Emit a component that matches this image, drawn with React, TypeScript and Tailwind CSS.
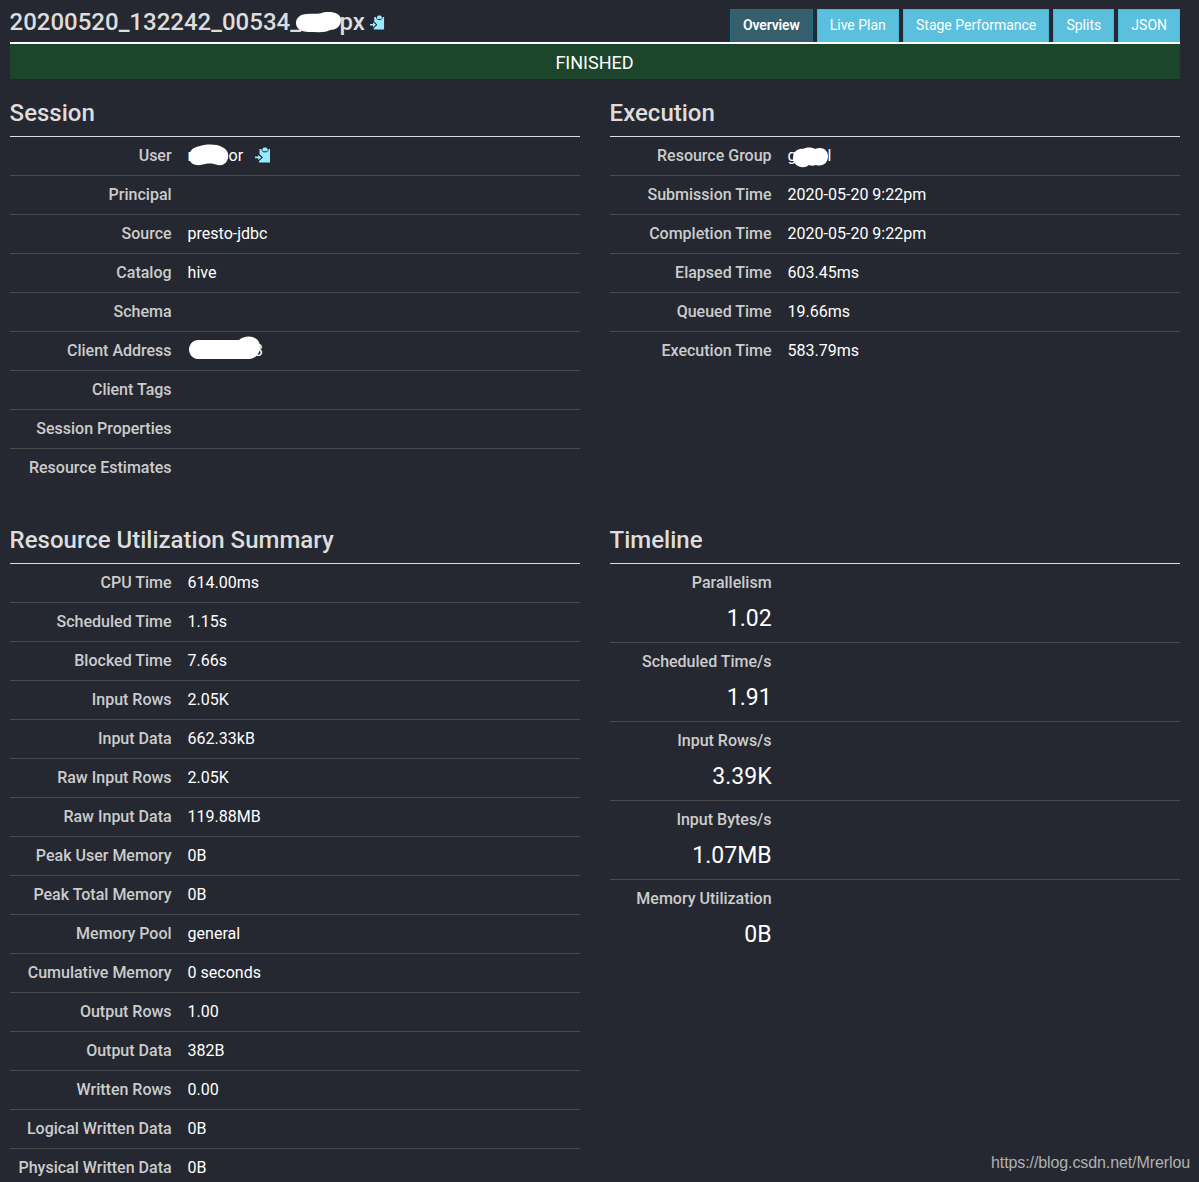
import type { ReactNode } from 'react'

const tabs = ['Live Plan', 'Stage Performance', 'Splits', 'JSON']

const execution = [
  ['Submission Time', '2020-05-20 9:22pm'],
  ['Completion Time', '2020-05-20 9:22pm'],
  ['Elapsed Time', '603.45ms'],
  ['Queued Time', '19.66ms'],
  ['Execution Time', '583.79ms'],
]

const resources = [
  ['CPU Time', '614.00ms'],
  ['Scheduled Time', '1.15s'],
  ['Blocked Time', '7.66s'],
  ['Input Rows', '2.05K'],
  ['Input Data', '662.33kB'],
  ['Raw Input Rows', '2.05K'],
  ['Raw Input Data', '119.88MB'],
  ['Peak User Memory', '0B'],
  ['Peak Total Memory', '0B'],
  ['Memory Pool', 'general'],
  ['Cumulative Memory', '0 seconds'],
  ['Output Rows', '1.00'],
  ['Output Data', '382B'],
  ['Written Rows', '0.00'],
  ['Logical Written Data', '0B'],
  ['Physical Written Data', '0B'],
]

const timeline = [
  ['Parallelism', '1.02'],
  ['Scheduled Time/s', '1.91'],
  ['Input Rows/s', '3.39K'],
  ['Input Bytes/s', '1.07MB'],
  ['Memory Utilization', '0B'],
]

// clipboard with an arrow pointing into it
function CopyIcon({ className }: { className: string }) {
  return (
    <svg viewBox="0 0 16 16" className={className} fill="#99e9ff">
      <path d="M4.5 2H15v13.5H4V13.2L7.6 10.4 4.5 7.8z" />
      <path d="M7 1.8v1.6l1.2 1.4h3.6L13 3.400V1.8" fill="none" stroke="#252830" strokeWidth="1" />
      <path d="M7.6 3.2V1.600L8.8.5h2.4l1.2 1.100v1.6l-.8.9H8.400z" />
      <path d="M3.8 7L7.4 10.4l-3.600 3.4" fill="none" stroke="#252830" strokeWidth="1" />
      <path d="M0 9.600h3.2V7.800L6.400 10.4l-3.200 2.6V11.200H0z" />
    </svg>
  )
}

function Section({ title, className = '', children }: { title: string; className?: string; children: ReactNode }) {
  return (
    <section className={className}>
      <h3 className="h-[38px] border-b border-[#ddd] text-2xl leading-[28px] font-medium text-[#ddd]">
        <span className="-ml-[0.4px]">{title}</span>
      </h3>
      {children}
    </section>
  )
}

function Row({ label, children }: { label: string; children?: ReactNode }) {
  return (
    <div className="flex h-[39px] border-b border-[#4a4a4a] text-base leading-[37px] last:border-b-0">
      <div className="w-[161.6px] shrink-0 text-right font-medium text-[#ccc]">{label}</div>
      <div className="flex pl-4 text-white">{children}</div>
    </div>
  )
}

export default function App() {
  return (
    <div className="relative h-[1182px] overflow-hidden bg-[#252830] pr-[19px] pl-[10px] font-[Roboto,sans-serif] text-white">
      <header className="flex h-[44px] justify-between border-b-2 border-white">
        <h3 className="-ml-[0.5px] flex pt-[8px] text-2xl leading-[28px] font-medium text-[#ddd]">
          20200520_132242_00534_
          <svg viewBox="0 0 50 24" className="-ml-[6px] mt-[2px] h-[24px] w-[50px]">
            <path d="M12 4C18 3 22 5 28 2.5C37 1 46 3 46 10C46 17 40 20 35 20C31 23 22 22 14 22C5 22 1 18 1 13C1 8 5 4 12 4z" fill="#fff" />
          </svg>
          <span className="-ml-[5.5px]">px</span>
          <CopyIcon className="mt-[7px] ml-[5px] size-[15px]" />
        </h3>
        <nav className="flex gap-[4.15px] pt-[9px] text-sm leading-[31px] whitespace-nowrap">
          <a className="border border-b-0 border-[#1b6d85] bg-[#365f6e] px-3 font-semibold tracking-[-0.16px]">Overview</a>
          {tabs.map((tab) => (
            <a key={tab} className="border border-b-0 border-[#46b8da] bg-[#5bc0de] px-3">{tab}</a>
          ))}
        </nav>
      </header>
      <div className="h-[35px] bg-[#1c462b] pr-px text-center text-lg leading-[37px]">FINISHED</div>

      <main className="grid grid-cols-2 gap-x-[30px] pt-[20px]">
        <Section title="Session" className="h-[427px]">
          <Row label="User">
            <span>r</span>
            <svg viewBox="0 0 44 24" className="-ml-[5px] mt-[7px] h-[24px] w-[44px]">
              <path d="M1 13C1 6 6 3 12 2C20 0 28 0 34 3C39 5 41 10 40 14C39 19 35 22 30 21C26 20 23 19 17 20C8 23 1 20 1 13z" fill="#fff" />
            </svg>
            <span className="-ml-[3.5px]">or</span>
            <CopyIcon className="mt-[10px] ml-[11.5px] size-[16px]" />
          </Row>
          <Row label="Principal" />
          <Row label="Source">presto-jdbc</Row>
          <Row label="Catalog">hive</Row>
          <Row label="Schema" />
          <Row label="Client Address">
            <svg viewBox="0 0 73 24" className="relative z-10 mt-[4px] h-[24px] w-[73px]">
              <path d="M10 4H51C57-2 72-1 72 11C72 18 67 23 61 23H10C-2 22-2 5 10 4z" fill="#fff" />
            </svg>
            <span className="-ml-[6.5px]">3</span>
          </Row>
          <Row label="Client Tags" />
          <Row label="Session Properties" />
          <Row label="Resource Estimates" />
        </Section>

        <Section title="Execution">
          <Row label="Resource Group">
            <span>g</span>
            <svg viewBox="0 0 38 22" className="-ml-[5px] mt-[10px] h-[22px] w-[38px]">
              <path d="M1 11C1 5 6 1 11 2C14 0 20 0 23 2C30-1 36 3 36 9C36 16 31 20 24 18C21 19 19 19 17 18C11 23 1 19 1 11z" fill="#fff" />
            </svg>
            <span className="-ml-[2px]">l</span>
          </Row>
          {execution.map(([label, value]) => (
            <Row key={label} label={label}>{value}</Row>
          ))}
        </Section>

        <Section title="Resource Utilization Summary">
          {resources.map(([label, value]) => (
            <Row key={label} label={label}>{value}</Row>
          ))}
        </Section>

        <Section title="Timeline">
          {timeline.map(([label, value]) => (
            <div key={label} className="h-[79px] border-b border-[#4a4a4a] text-right last:border-b-0">
              <div className="w-[161.6px] text-base leading-[37px] font-medium text-[#ccc]">{label}</div>
              <div className="w-[161.6px] text-[23px] leading-[36px]">{value}</div>
            </div>
          ))}
        </Section>
      </main>

      <div className="absolute right-[9px] bottom-[7px] font-['Liberation_Sans',Arial,sans-serif] text-base tracking-[-0.1px] text-[#b0b1b4]">
        https://blog.csdn.net/Mrerlou
      </div>
    </div>
  )
}
